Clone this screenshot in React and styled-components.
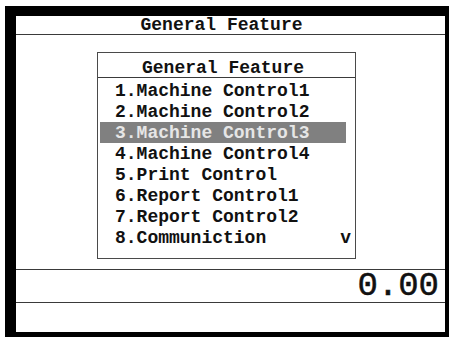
import React from 'react';
import styled, { createGlobalStyle } from 'styled-components';

const GlobalStyle = createGlobalStyle`
  html, body {
    margin: 0;
    padding: 0;
    background: #ffffff;
  }
`;

const mono = `"Courier New", "Liberation Mono", monospace`;

const Page = styled.div`
  width: 449px;
  height: 338px;
  box-sizing: border-box;
  padding: 6px 0 1px 5px;
  overflow: hidden;
`;

const Frame = styled.div`
  height: 100%;
  box-sizing: border-box;
  border-style: solid;
  border-color: #000000;
  border-width: 10px 4px 5px 11px;
  background: #ffffff;
  display: flex;
  flex-direction: column;
`;

const TitleBar = styled.div`
  height: 18px;
  line-height: 18px;
  border-bottom: 1px solid #3a3a3a;
  text-align: center;
  padding-right: 18px;
  font-family: ${mono};
  font-weight: bold;
  font-size: 18px;
  color: #111;
  white-space: pre;
`;

const Body = styled.div`
  flex: 1;
  padding: 17px 0 0 81px;
`;

const MenuBox = styled.div`
  width: 259px;
  height: 207px;
  box-sizing: border-box;
  border: 1px solid #4a4a4a;
  font-family: ${mono};
  font-weight: bold;
  font-size: 18px;
  color: #111;
`;

const MenuTitle = styled.div`
  height: 24px;
  line-height: 30px;
  border-bottom: 1px solid #3a3a3a;
  text-align: center;
  padding-right: 7px;
  white-space: pre;
`;

const MenuList = styled.div`
  padding-top: 2px;
  display: flex;
  flex-direction: column;
`;

const MenuItem = styled.div`
  height: 21px;
  box-sizing: border-box;
  padding: 2px 0 0 15px;
  line-height: 18px;
  margin: 0 9px 0 2px;
  display: flex;
  justify-content: space-between;
  white-space: pre;
  background: ${p => (p.$active ? '#808080' : 'transparent')};
  color: ${p => (p.$active ? '#e6e6e6' : '#111')};
`;

const ScrollMark = styled.span`
  margin-right: -5px;
`;

const AmountRow = styled.div`
  height: 32px;
  line-height: 32px;
  border-top: 1px solid #3a3a3a;
  border-bottom: 1px solid #3a3a3a;
  text-align: right;
  padding-right: 6px;
  font-family: "Liberation Mono", monospace;
  font-size: 34px;
  color: #111;
  -webkit-text-stroke: 0.5px #111;
`;

const StatusRow = styled.div`
  height: 29px;
`;

const items = [
  '1.Machine Control1',
  '2.Machine Control2',
  '3.Machine Control3',
  '4.Machine Control4',
  '5.Print Control',
  '6.Report Control1',
  '7.Report Control2',
  '8.Communiction',
];

export default function App() {
  const active = 2;
  return (
    <>
      <GlobalStyle />
      <Page>
        <Frame>
          <TitleBar>General Feature</TitleBar>
          <Body>
            <MenuBox>
              <MenuTitle>General Feature</MenuTitle>
              <MenuList>
                {items.map((label, i) => (
                  <MenuItem key={label} $active={i === active}>
                    <span>{label}</span>
                    {i === items.length - 1 && <ScrollMark>v</ScrollMark>}
                  </MenuItem>
                ))}
              </MenuList>
            </MenuBox>
          </Body>
          <AmountRow>0.00</AmountRow>
          <StatusRow />
        </Frame>
      </Page>
    </>
  );
}
